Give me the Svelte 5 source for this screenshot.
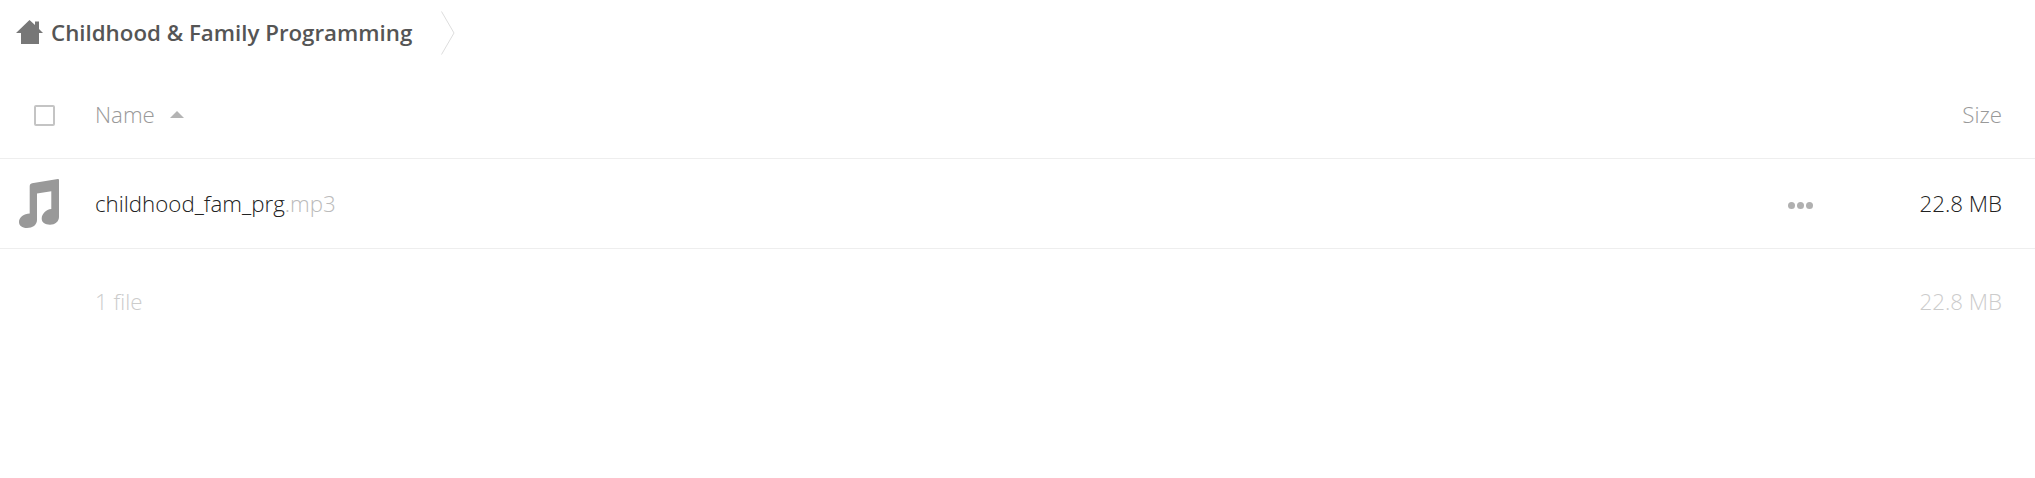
<script>
  const name = 'childhood_fam_prg';
</script>

<div class="page">
  <nav class="crumbs">
    <svg class="home" viewBox="0 0 27 24" width="27" height="24" aria-hidden="true">
      <path d="M0 13 L13.5 0 L19 5 V1.5 H23 V9 L27 13 H23 V24 H5 V13 Z" fill="#777" />
    </svg>
    <span class="folder">Childhood &amp; Family Programming</span>
    <svg class="sep" viewBox="0 0 14 44" width="14" height="44" aria-hidden="true">
      <path d="M0.5 0.5 L13 22 L0.5 43.5" fill="none" stroke="#ddd" />
    </svg>
  </nav>

  <div class="row head">
    <div class="check-col"><span class="check"></span></div>
    <div class="name-col">
      <span>Name</span>
      <span class="caret"></span>
    </div>
    <div class="size">Size</div>
  </div>

  <div class="row file">
    <div class="icon-col">
      <svg viewBox="0 0 40 49" width="40" height="49" aria-hidden="true">
        <path fill="#999" d="M38.8 0 C39.7 0 40 .5 40 1.2 V38 C40 42.5 36 45.7 31 45.7 C26 45.7 22.7 43.5 22.7 39.5 C22.7 35 27 30.5 32.3 30 V12.3 L18 14.5 V41 C18 46 13.5 49 8 49 C3 49 0 46.5 0 43 C0 38.5 5 34.5 10.7 34.5 V7.5 C10.7 5.5 11.5 4.6 13 4.2 Z" />
      </svg>
    </div>
    <div class="name-col fname">{name}<span class="ext">.mp3</span></div>
    <div class="dots"><i></i><i></i><i></i></div>
    <div class="size dark">22.8 MB</div>
  </div>

  <div class="row summary">
    <div class="check-col"></div>
    <div class="name-col">1 file</div>
    <div class="size">22.8 MB</div>
  </div>
</div>

<style>
  :global(body) {
    margin: 0;
    background: #fff;
  }
  .page {
    font-family: "Open Sans", sans-serif;
    font-weight: 300;
    font-size: 22.3px;
    height: 478px;
    overflow: hidden;
  }
  .crumbs {
    display: flex;
    align-items: center;
    height: 66px;
    padding-left: 16px;
  }
  .home {
    margin-top: -2px;
  }
  .folder {
    margin-left: 8px;
    font-weight: 600;
    color: #555;
    margin-bottom: 1px;
  }
  .sep {
    margin-left: 29px;
  }
  .row {
    display: flex;
    align-items: center;
    box-sizing: border-box;
  }
  .head {
    height: 93px;
    border-bottom: 1px solid #eee;
    color: #999;
    padding-top: 5px;
  }
  .check-col,
  .icon-col {
    width: 95px;
    flex: none;
  }
  .check-col {
    display: flex;
    padding-left: 33.5px;
    box-sizing: border-box;
  }
  .check {
    width: 21px;
    height: 21px;
    margin-top: 2px;
    box-sizing: border-box;
    border: 2px solid #c4c4c4;
    border-radius: 2px;
  }
  .name-col {
    flex: 1;
    display: flex;
    align-items: center;
  }
  .caret {
    margin-left: 15px;
    width: 0;
    height: 0;
    border-left: 7px solid transparent;
    border-right: 7px solid transparent;
    border-bottom: 7px solid #b4b4b4;
  }
  .size {
    padding-right: 33px;
    text-align: right;
  }
  .file {
    height: 90px;
    border-bottom: 1px solid #eee;
  }
  .icon-col {
    display: flex;
    padding-left: 19px;
    box-sizing: border-box;
  }
  .fname {
    color: #222;
    padding-bottom: 1px;
  }
  .file .dark {
    padding-bottom: 1px;
  }
  .ext {
    color: #bbb;
  }
  .dots {
    display: flex;
    gap: 2px;
    margin-right: 106px;
    margin-top: 3px;
  }
  .dots i {
    width: 7px;
    height: 7px;
    border-radius: 50%;
    background: #b0b0b0;
  }
  .dark {
    color: #222;
  }
  .summary {
    height: 106px;
    color: #ccc;
    padding-bottom: 2px;
  }
</style>
